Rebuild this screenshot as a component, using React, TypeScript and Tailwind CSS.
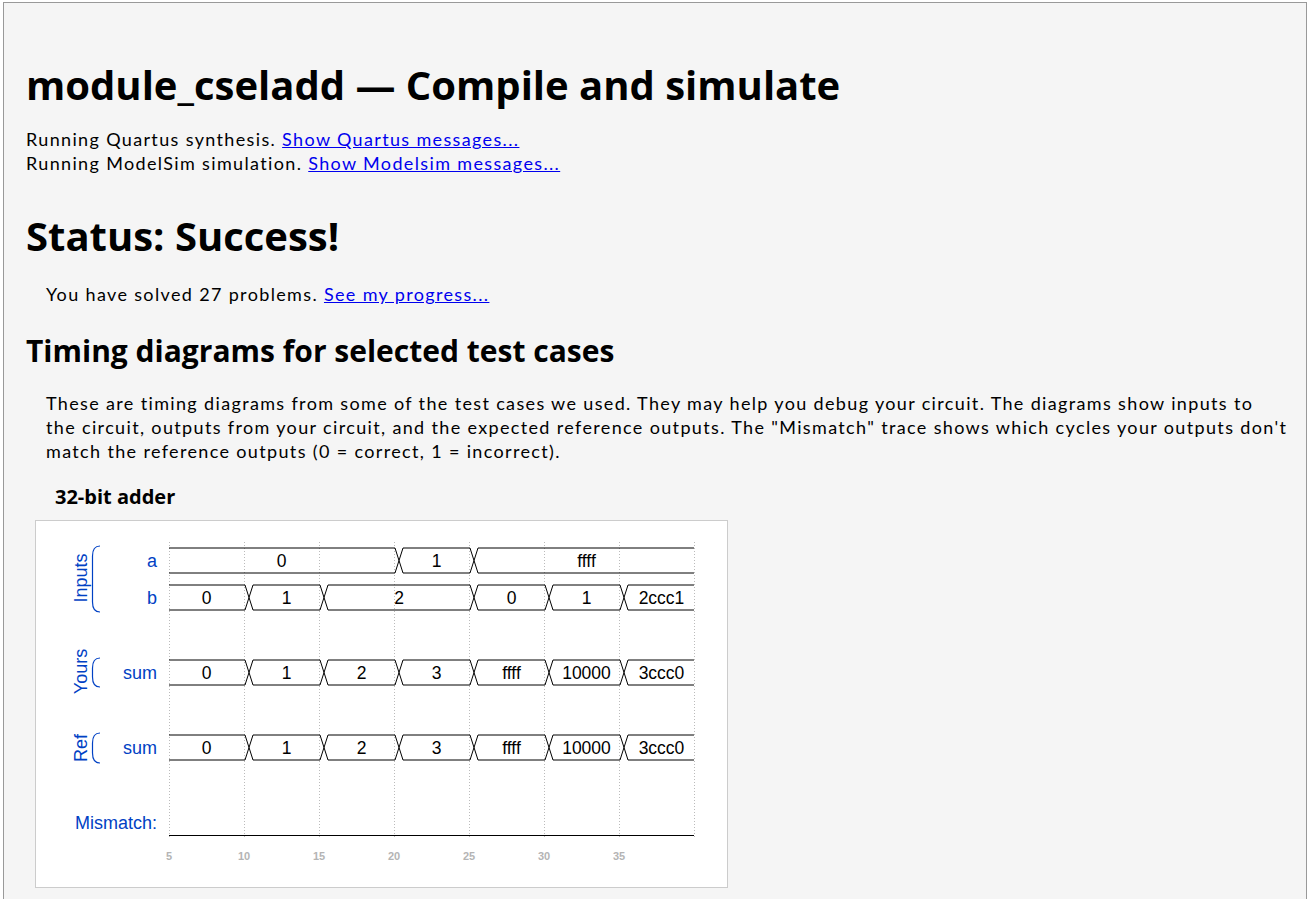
import React from "react";

const BLUE = "#0041c4";
const GRID = [170, 245, 320, 395, 470, 545, 620, 695];

type Seg = { from: number; to: number; label: string };

// a bus wave, transitions sit 5px right of the grid line
function Bus({ cy, segs }: { cy: number; segs: Seg[] }) {
  const top = cy - 12.5;
  const bot = cy + 12.5;
  return (
    <g>
      {segs.map((s, i) => {
        const first = i === 0;
        const last = i === segs.length - 1;
        const x0 = first ? s.from : s.from + 5;
        const x1 = last ? s.to : s.to + 5;
        let d = "";
        if (first) {
          d += `M${x0} ${top} `;
        } else {
          d += `M${x0} ${cy} L${x0 + 4} ${top} `;
        }
        if (last) {
          d += `L${x1} ${top} M${x1} ${bot} `;
        } else {
          d += `L${x1 - 4} ${top} L${x1} ${cy} L${x1 - 4} ${bot} `;
        }
        d += first ? `L${x0} ${bot}` : `L${x0 + 4} ${bot} L${x0} ${cy}`;
        const tx = first ? (s.from + s.to) / 2 : last ? (s.from + 10 + s.to) / 2 : (s.from + s.to) / 2 + 5;
        return (
          <g key={i}>
            <path d={d} fill="none" stroke="#000" strokeWidth={1} />
            <text x={tx} y={cy + 6.5} textAnchor="middle" fontSize={17.5} fill="#000">
              {s.label}
            </text>
          </g>
        );
      })}
    </g>
  );
}

function seq(labels: string[]): Seg[] {
  return labels.map((l, i) => ({ from: GRID[i], to: GRID[i + 1], label: l }));
}

function Bracket({ y0, y1 }: { y0: number; y1: number }) {
  return (
    <path
      d={`M101 ${y0} C95 ${y0} 93.5 ${y0 + 4} 93.5 ${y0 + 10} L93.5 ${y1 - 10} C93.5 ${y1 - 4} 95 ${y1} 101 ${y1}`}
      fill="none"
      stroke={BLUE}
      strokeWidth={1.2}
    />
  );
}

function TimingDiagram() {
  return (
    <svg width={691} height={366} className="block tracking-normal" style={{ fontFamily: "'Liberation Sans', Arial, sans-serif" }}>
      <g transform="translate(-37,-521)">
        {GRID.map((x) => (
          <line key={x} x1={x + 0.5} y1={542} x2={x + 0.5} y2={838} stroke="#bbb" strokeWidth={1} strokeDasharray="1 2" />
        ))}
        {[5, 10, 15, 20, 25, 30, 35].map((n, i) => (
          <text key={n} x={GRID[i]} y={860} textAnchor="middle" fontSize={11} fontWeight={700} fill="#b4b4b4">
            {n}
          </text>
        ))}

        {/* group labels */}
        <text transform="translate(88,578) rotate(-90)" textAnchor="middle" fontSize={18} fill={BLUE}>Inputs</text>
        <Bracket y0={546} y1={612} />
        <text transform="translate(88,671.5) rotate(-90)" textAnchor="middle" fontSize={18} fill={BLUE}>Yours</text>
        <Bracket y0={658} y1={687} />
        <text transform="translate(88,748) rotate(-90)" textAnchor="middle" fontSize={18} fill={BLUE}>Ref</text>
        <Bracket y0={733} y1={763} />

        {/* signal names */}
        <text x={158} y={566.5} textAnchor="end" fontSize={18} fill={BLUE}>a</text>
        <text x={158} y={604} textAnchor="end" fontSize={18} fill={BLUE}>b</text>
        <text x={158} y={678.5} textAnchor="end" fontSize={18} fill={BLUE}>sum</text>
        <text x={158} y={754} textAnchor="end" fontSize={18} fill={BLUE}>sum</text>
        <text x={158} y={829} textAnchor="end" fontSize={18} fill={BLUE}>Mismatch:</text>

        <Bus
          cy={560.5}
          segs={[
            { from: 170, to: 395, label: "0" },
            { from: 395, to: 470, label: "1" },
            { from: 470, to: 695, label: "ffff" },
          ]}
        />
        <Bus
          cy={597.5}
          segs={[
            { from: 170, to: 245, label: "0" },
            { from: 245, to: 320, label: "1" },
            { from: 320, to: 470, label: "2" },
            { from: 470, to: 545, label: "0" },
            { from: 545, to: 620, label: "1" },
            { from: 620, to: 695, label: "2ccc1" },
          ]}
        />
        <Bus cy={672.5} segs={seq(["0", "1", "2", "3", "ffff", "10000", "3ccc0"])} />
        <Bus cy={747.5} segs={seq(["0", "1", "2", "3", "ffff", "10000", "3ccc0"])} />

        <line x1={170} y1={835.5} x2={695} y2={835.5} stroke="#000" strokeWidth={1} />
      </g>
    </svg>
  );
}

export default function App() {
  const body = "font-['Lato','Liberation_Sans',sans-serif] text-[18px] leading-[24px] tracking-[1.35px] text-black";
  const link = "text-[#0000ee] underline";
  const heading = "font-['Open_Sans','Liberation_Sans',sans-serif] font-bold tracking-normal text-black";

  return (
    <div className="min-h-screen bg-white pl-[3px] pt-[2px]">
      <div className={`w-[1304px] min-h-[910px] border border-[#999] bg-[#f5f5f5] pl-[22px] pr-[20px] pt-[60px] ${body}`}>
        <h1 className={`${heading} text-[40px] leading-[44px]`}>module_cseladd — Compile and simulate</h1>

        <div className="mt-[20px]">
          <div>
            Running Quartus synthesis. <a className={link} href="#">Show Quartus messages...</a>
          </div>
          <div>
            Running ModelSim simulation. <a className={link} href="#">Show Modelsim messages...</a>
          </div>
        </div>

        <h2 className={`${heading} mt-[36px] text-[40px] leading-[50px]`}>Status: Success!</h2>

        <p className="mt-[21px] pl-[20px]">
          You have solved 27 problems. <a className={link} href="#">See my progress...</a>
        </p>

        <h3 className={`${heading} mt-[28px] text-[30px] leading-[34px]`}>Timing diagrams for selected test cases</h3>

        <p className="mt-[23px] pl-[20px] whitespace-nowrap">
          These are timing diagrams from some of the test cases we used. They may help you debug your circuit. The diagrams show inputs to
          <br />
          the circuit, outputs from your circuit, and the expected reference outputs. The "Mismatch" trace shows which cycles your outputs don't
          <br />
          match the reference outputs (0 = correct, 1 = incorrect).
        </p>

        <h4 className={`${heading} mt-[22px] pl-[29px] text-[20px] leading-[24px]`}>32-bit adder</h4>

        <div className="mt-[11px] ml-[9px] w-[693px] border border-[#ccc] bg-white">
          <TimingDiagram />
        </div>
      </div>
    </div>
  );
}
